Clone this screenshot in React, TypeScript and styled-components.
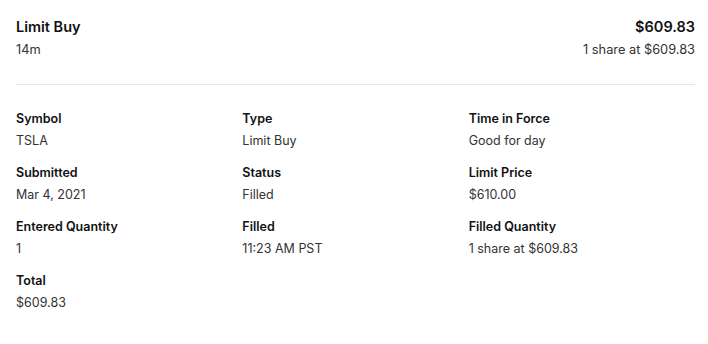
import React from "react";
import styled, { createGlobalStyle } from "styled-components";

const Global = createGlobalStyle`
  html, body { margin: 0; padding: 0; background: #fff; }
  body { font-family: Inter, "Noto Sans", sans-serif; color: #111; }
`;

const Page = styled.div`
  padding: 17px 13px 0 16px;
`;

const Header = styled.div`
  display: flex;
  justify-content: space-between;
  align-items: flex-start;
  padding-bottom: 26px;
  border-bottom: 1px solid #e3e7eb;
`;

const Side = styled.div<{ $right?: boolean }>`
  display: flex;
  flex-direction: column;
  gap: 5px;
  align-items: ${(p) => (p.$right ? "flex-end" : "flex-start")};
`;

const Title = styled.div`
  font-size: 14.5px;
  font-weight: 600;
  line-height: 20px;
  color: #111;
`;

const Sub = styled.div`
  font-size: 12.8px;
  line-height: 16px;
  color: #333;
`;

const Grid = styled.div`
  display: grid;
  grid-template-columns: repeat(3, 1fr);
  row-gap: 14px;
  padding-top: 25px;
`;

const Cell = styled.div`
  display: flex;
  flex-direction: column;
  gap: 4px;
`;

const Label = styled.div`
  font-size: 12.5px;
  font-weight: 600;
  line-height: 18px;
  color: #111;
`;

const Value = styled.div`
  font-size: 12.5px;
  line-height: 18px;
  color: #333;
`;

const items: [string, string][] = [
  ["Symbol", "TSLA"],
  ["Type", "Limit Buy"],
  ["Time in Force", "Good for day"],
  ["Submitted", "Mar 4, 2021"],
  ["Status", "Filled"],
  ["Limit Price", "$610.00"],
  ["Entered Quantity", "1"],
  ["Filled", "11:23 AM PST"],
  ["Filled Quantity", "1 share at $609.83"],
  ["Total", "$609.83"],
];

export default function App() {
  return (
    <Page>
      <Global />
      <Header>
        <Side>
          <Title>Limit Buy</Title>
          <Sub>14m</Sub>
        </Side>
        <Side $right>
          <Title>$609.83</Title>
          <Sub>1 share at $609.83</Sub>
        </Side>
      </Header>
      <Grid>
        {items.map(([l, v]) => (
          <Cell key={l}>
            <Label>{l}</Label>
            <Value>{v}</Value>
          </Cell>
        ))}
      </Grid>
    </Page>
  );
}
